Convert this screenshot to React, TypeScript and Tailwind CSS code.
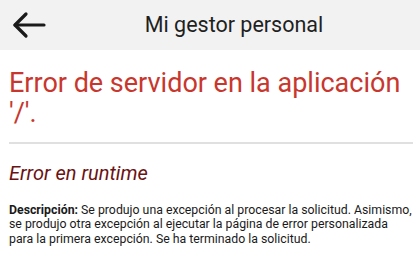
export default function App() {
  return (
    <div className="w-[420px] h-[274px] bg-white overflow-hidden font-['Roboto',sans-serif]">
      <div className="h-[50px] bg-[#f2f2f2] flex items-center">
        <div className="w-[56px] flex justify-center pl-[1px]">
          <svg width="34" height="28" viewBox="0 0 34 28" fill="none" stroke="#1a1a1a" strokeWidth="3.2" strokeLinecap="round" strokeLinejoin="round">
            <path d="M32 14H3" />
            <path d="M14 3L3 14L14 25" />
          </svg>
        </div>
        <div className="flex-1 text-center pr-[8px] text-[21.5px] text-[#1f1f1f]">Mi gestor personal</div>
      </div>
      <div className="px-[9px]">
        <h1 className="mt-[17.5px] text-[27px] leading-[30px] text-[#c8372d]">
          Error de servidor en la aplicación '/'.
        </h1>
        <hr className="mt-[14.5px] border-0 h-[2px] bg-[#e0e0e0] mr-[-2px]" />
        <h2 className="mt-[17px] text-[20px] leading-[24px] italic text-[#6b1212]">Error en runtime</h2>
        <p className="mt-[17.5px] mr-[-2px] text-[12.3px] leading-[14.5px] text-[#1a1a1a]">
          <b>Descripción:</b> Se produjo una excepción al procesar la solicitud. Asimismo, se produjo otra excepción al ejecutar la página de error personalizada para la primera excepción. Se ha terminado la solicitud.
        </p>
      </div>
    </div>
  )
}
